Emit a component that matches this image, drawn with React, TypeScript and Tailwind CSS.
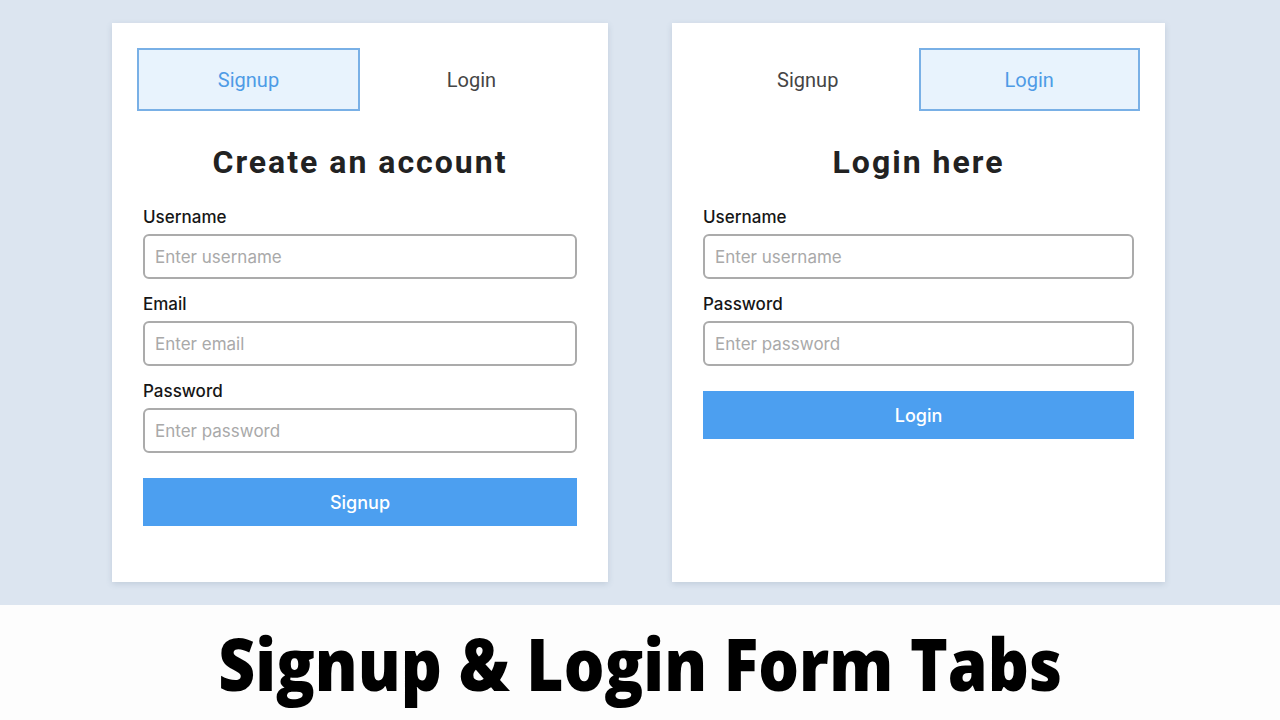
import React from "react";

type Field = { label: string; placeholder: string };

function Tabs({ active }: { active: "signup" | "login" }) {
  const on =
    "border-2 border-[#79b0e6] bg-[#e8f3fd] text-[#4e9be6]";
  const off = "border-2 border-transparent text-[#454545]";
  return (
    <div className="flex font-['Roboto',sans-serif] text-[20px]">
      <div
        className={`flex h-[63px] flex-1 items-center justify-center ${
          active === "signup" ? on : off
        }`}
      >
        Signup
      </div>
      <div
        className={`flex h-[63px] flex-1 items-center justify-center ${
          active === "login" ? on : off
        }`}
      >
        Login
      </div>
    </div>
  );
}

function FormCard({
  active,
  title,
  fields,
  button,
  width,
}: {
  active: "signup" | "login";
  title: string;
  fields: Field[];
  button: string;
  width: string;
}) {
  return (
    <div
      className={`${width} h-[559px] bg-white px-[25px] pt-[25px] shadow-[0_2px_6px_rgba(80,100,130,0.18)]`}
    >
      <Tabs active={active} />
      <div className="px-[6px]">
        <h2 className="mt-[32px] text-center font-['Roboto',sans-serif] text-[32px] leading-[38px] font-bold tracking-[2px] text-[#222]">
          {title}
        </h2>
        <div className="mt-[24px] font-['Inter',sans-serif]">
          {fields.map((f) => (
            <div key={f.label} className="mb-[13px]">
              <div className="mb-[5px] text-[17px] leading-[24px] font-medium text-[#161616]">
                {f.label}
              </div>
              <input
                className="h-[45px] w-full rounded-[6px] border-2 border-[#ababab] px-[10px] text-[17px] text-[#333] placeholder:text-[#a9a9a9] focus:outline-none"
                placeholder={f.placeholder}
                type={f.label === "Password" ? "password" : "text"}
              />
            </div>
          ))}
          <button className="mt-[12px] h-[48px] w-full bg-[#4c9ff0] text-[18px] font-medium text-white">
            {button}
          </button>
        </div>
      </div>
    </div>
  );
}

export default function App() {
  return (
    <div className="flex h-[720px] w-[1280px] flex-col">
      <div className="flex h-[605px] justify-center gap-[64px] bg-[#dce5f0] pt-[23px] pr-[3px]">
        <FormCard
          active="signup"
          title="Create an account"
          width="w-[496px]"
          fields={[
            { label: "Username", placeholder: "Enter username" },
            { label: "Email", placeholder: "Enter email" },
            { label: "Password", placeholder: "Enter password" },
          ]}
          button="Signup"
        />
        <FormCard
          active="login"
          title="Login here"
          width="w-[493px]"
          fields={[
            { label: "Username", placeholder: "Enter username" },
            { label: "Password", placeholder: "Enter password" },
          ]}
          button="Login"
        />
      </div>
      <div className="flex flex-1 items-center justify-center bg-[#fdfdfd]">
        {/* the title is a bit narrower than plain Open Sans */}
        <h1 className="scale-x-[0.89] font-['Open_Sans',sans-serif] text-[72px] leading-none font-extrabold text-black">
          Signup &amp; Login Form Tabs
        </h1>
      </div>
    </div>
  );
}
